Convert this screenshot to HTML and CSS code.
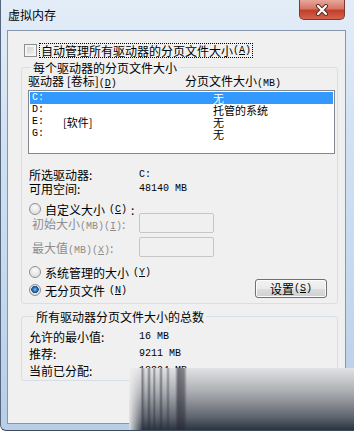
FILE: index.html
```html
<!DOCTYPE html>
<html lang="zh-CN">
<head>
  <meta charset="UTF-8" />
  <title>虚拟内存</title>
  <link rel="stylesheet" href="styles.css">
</head>
<body>

  <div class="window">
    <div class="titlebar">
      <span class="title">虚拟内存</span>
      <div class="close">
        <svg width="14" height="12" viewBox="0 0 14 12">
          <path d="M3 2 L11 10 M11 2 L3 10" stroke="#5a2a25" stroke-width="4" stroke-linecap="round"/>
          <path d="M3 2 L11 10 M11 2 L3 10" stroke="#fff" stroke-width="2.2" stroke-linecap="round"/>
        </svg>
      </div>
    </div>

    <div class="client">
      <div class="check-row">
        <span class="checkbox"></span>
        <span class="focus">自动管理所有驱动器的分页文件大小<span class="mono">(<u>A</u>)</span></span>
      </div>

      <div class="group group-drives">
        <span class="legend">每个驱动器的分页文件大小</span>
        <div class="list-head">
          <span class="col-drive">驱动器 [卷标]<span class="mono">(<u>D</u>)</span></span>
          <span>分页文件大小<span class="mono">(MB)</span></span>
        </div>
        <div class="listbox">
          <div class="row selected"><span class="drv mono">C:</span><span class="vol"></span><span>无</span></div>
          <div class="row"><span class="drv mono">D:</span><span class="vol"></span><span>托管的系统</span></div>
          <div class="row"><span class="drv mono">E:</span><span class="vol">[软件]</span><span>无</span></div>
          <div class="row"><span class="drv mono">G:</span><span class="vol"></span><span>无</span></div>
        </div>

        <div class="info">
          <div class="info-row"><span class="lbl">所选驱动器:</span><span class="mono">C:</span></div>
          <div class="info-row"><span class="lbl">可用空间:</span><span class="mono">48140 MB</span></div>
        </div>

        <div class="radio-row custom"><span class="radio"></span>自定义大小<span class="mono">(<u>C</u>)</span>:</div>
        <div class="size-row first">
          <span class="lbl">初始大小<span class="mono">(MB)(<u>I</u>)</span>:</span>
          <span class="input"></span>
        </div>
        <div class="size-row">
          <span class="lbl">最大值<span class="mono">(MB)(<u>X</u>)</span>:</span>
          <span class="input"></span>
        </div>

        <div class="radio-row sys"><span class="radio"></span>系统管理的大小<span class="mono">(<u>Y</u>)</span></div>
        <div class="radio-row none">
          <span class="radio on"></span>无分页文件<span class="mono">(<u>N</u>)</span>
          <span class="button">设置<span class="mono">(<u>S</u>)</span></span>
        </div>
      </div>

      <div class="group group-total">
        <span class="legend">所有驱动器分页文件大小的总数</span>
        <div class="total-row"><span class="lbl">允许的最小值:</span><span class="mono">16 MB</span></div>
        <div class="total-row"><span class="lbl">推荐:</span><span class="mono">9211 MB</span></div>
        <div class="total-row"><span class="lbl">当前已分配:</span><span class="mono">13294 MB</span></div>
      </div>
    </div>

    <div class="smudge"></div>
  </div>

</body>
</html>
```

FILE: styles.css
```css
* {
  box-sizing: border-box;
}

body {
  margin: 0;
  font-family: "Noto Sans CJK SC", sans-serif;
  font-size: 12px;
  color: #000;
}

.mono {
  font-family: "Liberation Mono", monospace;
  font-size: 10px;
}

.window {
  position: relative;
  width: 354px;
  height: 431px;
  overflow: hidden;
  background: linear-gradient(#e3edf8, #d2e2f3 30%, #c3d7ee 70%, #b8cde6);
  border-left: 1px solid #56667c;
  border-bottom: 1px solid #3e4a5a;
  border-bottom-left-radius: 6px;
}

.titlebar {
  height: 30px;
  display: flex;
  justify-content: space-between;
  padding-left: 7px;
}

.title {
  line-height: 30px;
}

.close {
  width: 46px;
  height: 20px;
  margin-right: 9px;
  display: flex;
  align-items: center;
  justify-content: center;
  border: 1px solid #7a3a34;
  border-top: none;
  border-radius: 0 0 5px 5px;
  background: linear-gradient(#e9a799, #d47767 45%, #c23d2a 55%, #d3644e);
}

.client {
  height: 394px;
  margin: 0 8px 0 6px;
  border: 1px solid #8596ad;
  background: #f0f0f0;
}

.check-row {
  display: flex;
  align-items: center;
  height: 14px;
  margin: 12px 0 0 16px;
  gap: 2px;
}

.checkbox {
  width: 13px;
  height: 13px;
  border: 1px solid #8e8f8f;
  background: linear-gradient(135deg, #cfcfcf, #f4f4f4);
  box-shadow: inset 0 0 0 2px #f4f4f4;
}

.focus {
  display: flex;
  align-items: center;
  height: 15px;
  padding: 0 1px;
  border: 1px dotted #000;
}

.group {
  border: 1px solid #d5dfe5;
  border-radius: 3px;
  margin-right: 7px;
  margin-left: 13px;
}

.legend {
  display: flex;
  align-items: center;
  width: max-content;
  height: 14px;
  margin: -8px 0 0 3px;
  padding: 0 2px;
  background: #f0f0f0;
}

.group-drives {
  height: 237px;
  margin-top: 10px;
  padding-left: 6px;
}

.list-head {
  display: flex;
  align-items: center;
  height: 14px;
  margin-top: -1px;
}

.col-drive {
  width: 157px;
}

.listbox {
  width: 307px;
  height: 64px;
  margin-top: 3px;
  padding: 1px;
  border: 1px solid #828790;
  background: #fff;
}

.row {
  display: flex;
  align-items: center;
  height: 12px;
  padding-left: 2px;
  font-size: 11px;
  line-height: 12px;
}

.row.selected {
  background: #3399ff;
  color: #fff;
}

.drv {
  width: 31px;
}

.vol {
  width: 150px;
}

.info {
  margin-top: 13px;
}

.info-row,
.total-row {
  display: flex;
  align-items: center;
  height: 14px;
  padding-left: 1px;
}

.lbl {
  width: 110px;
}

.radio-row {
  display: flex;
  align-items: center;
  height: 14px;
  gap: 4px;
  padding-left: 1px;
}

.radio {
  width: 12px;
  height: 12px;
  border-radius: 50%;
  border: 1px solid #8e8f8f;
  background: radial-gradient(circle at 50% 35%, #fbfbfb, #d6d6d6);
}

.radio.on {
  background:
    radial-gradient(circle at 50% 45%, #8fc0ec 0, #2f74ba 2px, #1b4f8c 3.5px, transparent 4px),
    radial-gradient(circle at 50% 35%, #fbfbfb, #d6d6d6);
}

.custom {
  margin-top: 7px;
}

.size-row {
  display: flex;
  align-items: center;
  height: 20px;
  margin-top: 4px;
  padding-left: 4px;
  color: #8d8d8d;
}

.size-row.first {
  margin-top: -3px;
}

.size-row .lbl {
  width: 107px;
}

.input {
  width: 75px;
  height: 20px;
  border: 1px solid #c6c6c6;
  border-radius: 2px;
  background: #f0f0f0;
}

.sys {
  margin-top: 8px;
}

.none {
  margin-top: 4px;
}

.button {
  align-self: flex-start;
  width: 72px;
  height: 19px;
  margin: -4px 10px 0 auto;
  display: flex;
  align-items: center;
  justify-content: center;
  border: 1px solid #707070;
  border-radius: 3px;
  background: linear-gradient(#f2f2f2, #ebebeb 50%, #dddddd 51%, #cfcfcf);
  box-shadow: inset 0 0 0 1px #fcfcfc;
}

.group-total {
  height: 65px;
  margin-top: 12px;
  padding-left: 7px;
}

.group-total .legend {
  margin-left: 5px;
  margin-bottom: 5px;
}

.total-row {
  height: 17px;
  padding-left: 0;
}

/* blurred patch over the bottom right corner */
.smudge {
  position: absolute;
  left: 128px;
  top: 368px;
  right: 0;
  bottom: 0;
  background:
    linear-gradient(to right, rgba(240, 240, 240, 0.9), rgba(240, 240, 240, 0) 14px),
    linear-gradient(to right, transparent 12px, rgba(40, 40, 50, 0.55) 13px, transparent 16px,
      transparent 18px, rgba(40, 40, 50, 0.5) 20px, transparent 22px,
      transparent 24px, rgba(40, 40, 50, 0.5) 25px, transparent 27px,
      transparent 30px, rgba(40, 40, 50, 0.5) 32px, transparent 34px,
      transparent 37px, rgba(40, 40, 50, 0.4) 39px, transparent 41px,
      transparent 46px, rgba(40, 40, 50, 0.6) 49px, rgba(40, 40, 50, 0.5) 55px, transparent 58px),
    linear-gradient(#e2e2e4, #a9abb0 40%, #5d636d 80%, #2a3340);
}
```
